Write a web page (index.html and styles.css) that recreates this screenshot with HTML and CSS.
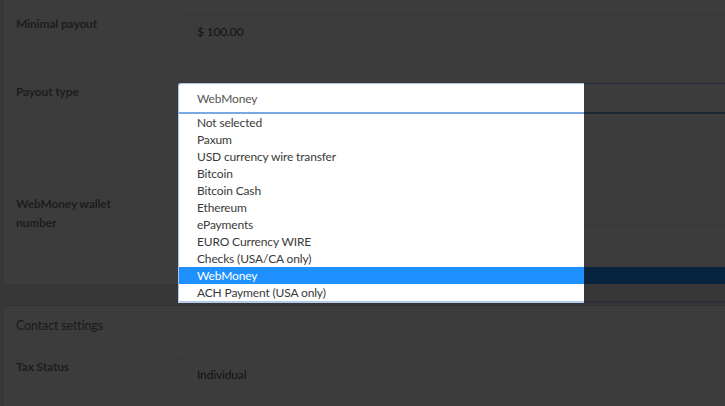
FILE: index.html
```html
<!DOCTYPE html>
<html lang="en">
<head>
<meta charset="utf-8">
<title>Payout settings</title>
<link rel="stylesheet" href="styles.css">
</head>
<body>
<div class="page">
  <section class="card card-payout">
    <div class="row row-first">
      <div class="label">Minimal payout</div>
      <div class="field"><div class="input">$ 100.00</div></div>
    </div>
    <div class="row row-select">
      <div class="label">Payout type</div>
      <div class="field">
        <div class="select-wrap">
          <div class="select">
            <div class="select-main">WebMoney</div>
            <div class="select-rest"></div>
          </div>
          <div class="dropdown">
            <div class="option"><div class="option-text">Not selected</div><div class="option-rest"></div></div>
            <div class="option"><div class="option-text">Paxum</div><div class="option-rest"></div></div>
            <div class="option"><div class="option-text">USD currency wire transfer</div><div class="option-rest"></div></div>
            <div class="option"><div class="option-text">Bitcoin</div><div class="option-rest"></div></div>
            <div class="option"><div class="option-text">Bitcoin Cash</div><div class="option-rest"></div></div>
            <div class="option"><div class="option-text">Ethereum</div><div class="option-rest"></div></div>
            <div class="option"><div class="option-text">ePayments</div><div class="option-rest"></div></div>
            <div class="option"><div class="option-text">EURO Currency WIRE</div><div class="option-rest"></div></div>
            <div class="option"><div class="option-text">Checks (USA/CA only)</div><div class="option-rest"></div></div>
            <div class="option selected"><div class="option-text">WebMoney</div><div class="option-rest"></div></div>
            <div class="option"><div class="option-text">ACH Payment (USA only)</div><div class="option-rest"></div></div>
            <div class="dropdown-edge"><div class="edge-main"></div><div class="edge-rest"></div></div>
          </div>
        </div>
      </div>
    </div>
    <div class="row row-wallet">
      <div class="label label-wrap">WebMoney wallet<br>number</div>
      <div class="field"><div class="input"></div></div>
    </div>
  </section>
  <section class="card card-contact">
    <div class="card-title">Contact settings</div>
    <div class="row">
      <div class="label">Tax Status</div>
      <div class="field"><div class="input">Individual</div></div>
    </div>
  </section>
</div>
</body>
</html>
```
FILE: styles.css
```css
html, body {
  margin: 0;
  padding: 0;
}
body {
  background: #373737;
  font-family: Lato, "Open Sans", "Liberation Sans", sans-serif;
  font-size: 12px;
  letter-spacing: -0.15px;
  height: 406px;
  overflow: hidden;
}
.page {
  padding-left: 3px;
}
.card {
  background: #3c3c3c;
  border: 1px solid #363636;
  border-right: none;
  border-radius: 4px 0 0 4px;
}
.card-payout {
  border-top: none;
  border-top-left-radius: 0;
  padding: 15px 0 52px;
  margin-bottom: 20px;
}
.card-contact {
  border-top-color: #303030;
  padding: 11px 0 20px;
}
.card-title {
  padding-left: 12px;
  line-height: 18px;
  font-size: 12.5px;
  color: #1a1a1a;
  margin-bottom: 23px;
}
.row {
  display: grid;
  grid-template-columns: 174px 1fr;
  align-items: start;
}
.row-first {
  margin-bottom: 37px;
}
.row-select {
  margin-bottom: 80px;
}
.label {
  padding-left: 12px;
  font-weight: 700;
  line-height: 18px;
  color: #1d1d1d;
}
.label-wrap {
  line-height: 19px;
}
.field {
  min-width: 0;
}
.input {
  box-sizing: border-box;
  height: 31px;
  border: 1px solid #383838;
  border-right: none;
  border-radius: 3px 0 0 3px;
  padding: 1px 0 0 18px;
  line-height: 29px;
  color: #121212;
}
.select-wrap {
  position: relative;
}
.select {
  display: grid;
  grid-template-columns: 406px 1fr;
  height: 31px;
}
.select-main {
  box-sizing: border-box;
  background: #fff;
  border: 1px solid #a9c6ea;
  border-bottom: 2px solid #7aa9e2;
  border-right: none;
  border-radius: 3px 0 0 0;
  padding: 2px 0 0 18px;
  line-height: 26px;
  color: #555;
}
.select-rest {
  border-top: 1px solid #1f2a36;
  border-bottom: 2px solid #1b2733;
}
.dropdown {
  position: absolute;
  top: 100%;
  left: 0;
  right: 0;
  z-index: 5;
}
.option {
  display: grid;
  grid-template-columns: 406px 1fr;
  height: 17px;
}
.option-text {
  box-sizing: border-box;
  height: 17px;
  background: #fff;
  border-left: 1px solid #a9c6ea;
  padding: 1px 0 0 18px;
  line-height: 16px;
  color: #3a3a3a;
  white-space: nowrap;
  overflow: hidden;
}
.option.selected .option-text {
  background: #1e90ff;
  color: #fff;
}
.option.selected .option-rest {
  background: #07233d;
}
.dropdown-edge {
  display: grid;
  grid-template-columns: 406px 1fr;
  height: 2px;
}
.edge-main {
  background: #b4cbea;
}
.edge-rest {
  background: #2b2f36;
}
```
